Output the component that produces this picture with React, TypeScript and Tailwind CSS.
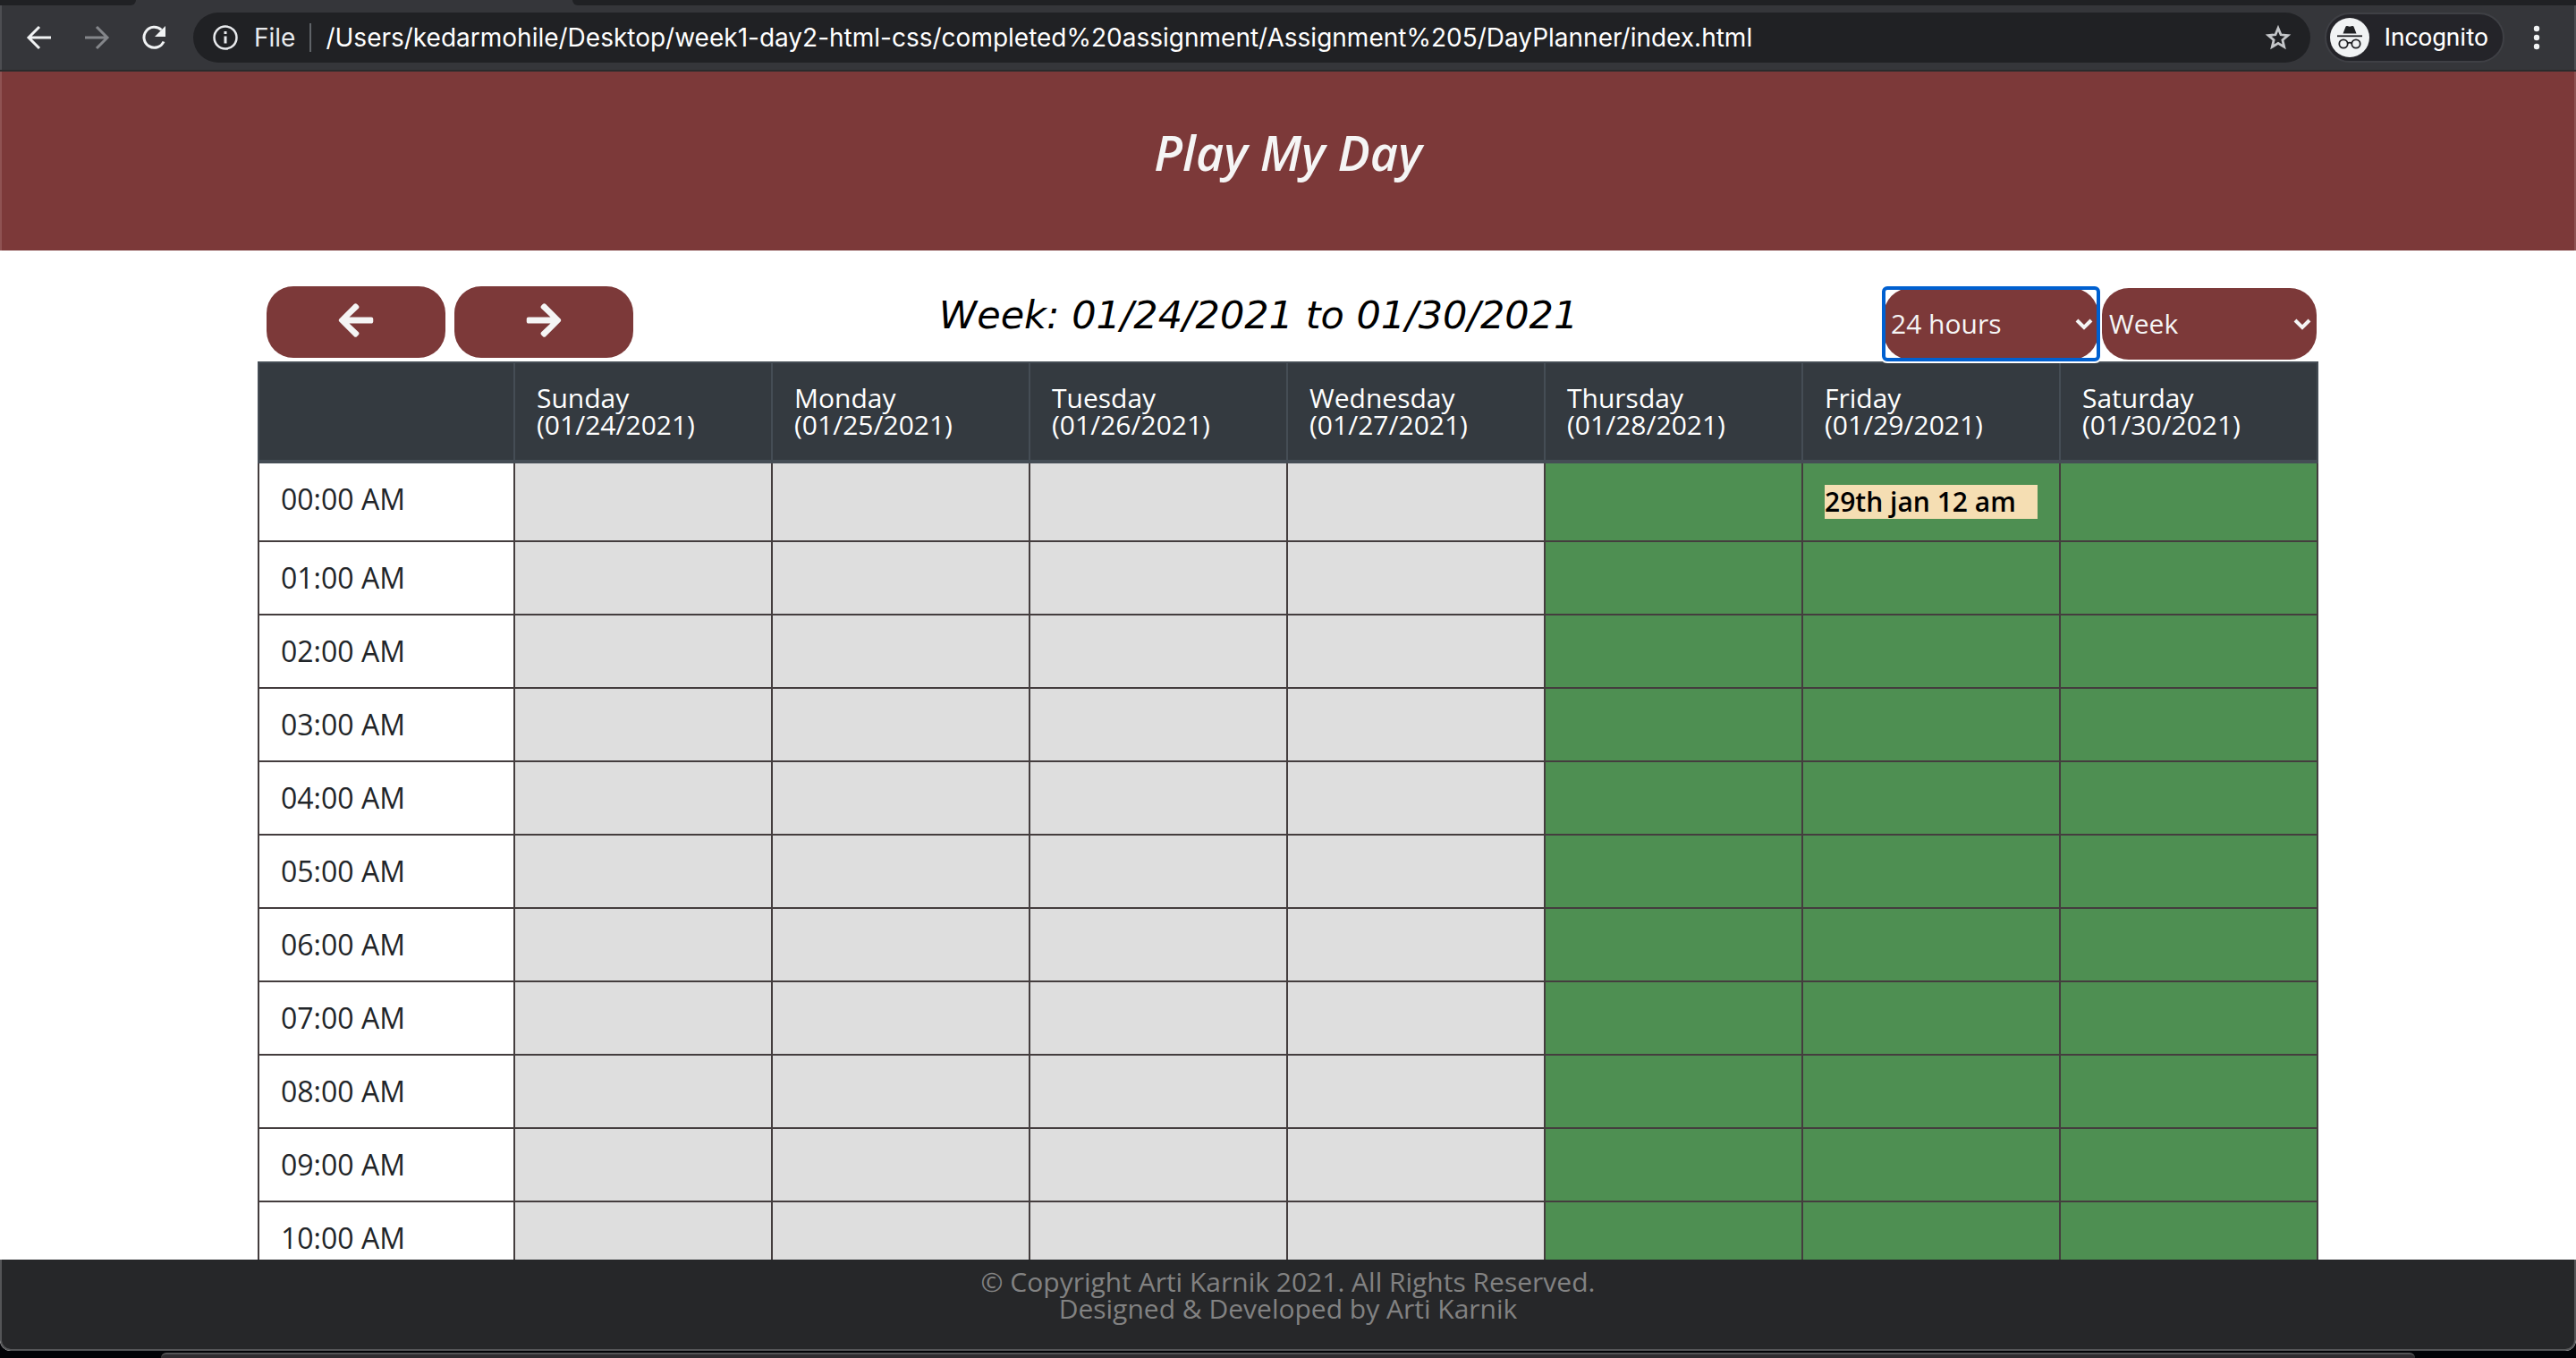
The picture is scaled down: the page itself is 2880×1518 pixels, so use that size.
import React from "react";
import { FaArrowLeft, FaArrowRight } from "react-icons/fa";

const days = [
  { name: "Sunday", date: "01/24/2021", past: true },
  { name: "Monday", date: "01/25/2021", past: true },
  { name: "Tuesday", date: "01/26/2021", past: true },
  { name: "Wednesday", date: "01/27/2021", past: true },
  { name: "Thursday", date: "01/28/2021", past: false },
  { name: "Friday", date: "01/29/2021", past: false },
  { name: "Saturday", date: "01/30/2021", past: false },
];

const hours = Array.from({ length: 11 }, (_, i) => `${String(i).padStart(2, "0")}:00 AM`);

const events: Record<string, string> = { "00:00 AM|01/29/2021": "29th jan 12 am" };

function BrowserBar() {
  return (
    <div className="shrink-0 border-b-2 border-[#2a2b2c] bg-[#35363a] font-['Inter',sans-serif] text-[28px] leading-8 text-white">
      <div className="flex h-[6px] justify-between">
        <div className="w-[152px] rounded-br-lg bg-[#202124]" />
        <div className="ml-[488px] grow rounded-bl-lg bg-[#202124]" />
      </div>
      <div className="flex h-[72px] items-center border-x-2 border-[#4d4e52] pr-[26px] pl-[22px]">
        <button aria-label="Back" className="mr-6">
          <svg className="size-10" viewBox="0 0 40 40" fill="none" stroke="#f1f3f4" strokeWidth="3">
            <path d="M33 20H9M20 8L8 20l12 12" />
          </svg>
        </button>
        <button aria-label="Forward" className="mr-6">
          <svg className="size-10" viewBox="0 0 40 40" fill="none" stroke="#84868a" strokeWidth="3">
            <path d="M7 20h24M20 8l12 12-12 12" />
          </svg>
        </button>
        <button aria-label="Reload" className="mr-6">
          <svg className="size-10" viewBox="0 0 40 40">
            <path d="M31 24.500A11.500 11.500 0 1 1 28.500 11.500" fill="none" stroke="#f1f3f4" strokeWidth="3" />
            <path d="M33 7v12H21z" fill="#f1f3f4" />
          </svg>
        </button>
        <div className="flex h-14 grow items-center rounded-full bg-[#202124] pl-5 pr-5">
          <svg className="size-8" viewBox="0 0 32 32" fill="none" stroke="#e8eaed" strokeWidth="2.500">
            <circle cx="16" cy="16" r="12.500" />
            <path d="M16 14.500v8M16 9v3" strokeWidth="3" />
          </svg>
          <span className="ml-4 text-[#e8eaed]">File</span>
          <span className="mx-4 h-8 w-[2px] bg-[#5f6368]" />
          <span className="grow">
            /Users/kedarmohile/Desktop/week1-day2-html-css/completed%20assignment/Assignment%205/DayPlanner/index.html
          </span>
          <button aria-label="Bookmark this page">
            <svg className="size-8" viewBox="0 0 32 32" fill="none" stroke="#c4c6c9" strokeWidth="2.800">
              <path d="M16 5.500l3 7.300 7.900.700-6 5.200 1.800 7.700-6.700-4.100-6.700 4.100 1.800-7.700-6-5.200 7.900-.700z" />
            </svg>
          </button>
        </div>
        <button className="ml-4 flex h-14 items-center gap-4 rounded-full border-2 border-[#3f4045] bg-[#242429] pl-1 pr-4 font-['Roboto',sans-serif]">
          <svg className="size-11" viewBox="0 0 44 44">
            <circle cx="22" cy="22" r="22" fill="#f1f3f4" />
            <path d="M14.500 17.500l3-7.800c.3-.7 1-.9 1.700-.7l2.800.8 2.800-.8c.7-.2 1.400 0 1.700.7l3 7.800z" fill="#202124" />
            <path d="M8 20.300h28" stroke="#202124" strokeWidth="1.800" />
            <g fill="none" stroke="#202124" strokeWidth="1.800">
              <circle cx="15" cy="29" r="4.700" />
              <circle cx="29" cy="29" r="4.700" />
              <path d="M19.500 28.500c1.500-1 3.500-1 5 0" />
            </g>
          </svg>
          <span>Incognito</span>
        </button>
        <button aria-label="Menu" className="ml-5">
          <svg className="h-8 w-8" viewBox="0 0 32 32" fill="#f1f3f4">
            <circle cx="16" cy="6" r="3.200" />
            <circle cx="16" cy="16" r="3.200" />
            <circle cx="16" cy="26" r="3.200" />
          </svg>
        </button>
      </div>
    </div>
  );
}

function Picker({ label, options, focused }: { label: string; options: string[]; focused?: boolean }) {
  return (
    <div
      className={
        focused
          ? "relative after:pointer-events-none after:absolute after:-inset-[2px] after:rounded-md after:border-4 after:border-[#0060d0] after:shadow-[0_0_0_2px_#fff]"
          : "relative"
      }
    >
      <select
        aria-label={label}
        className="block h-20 w-60 appearance-none rounded-[30px] bg-[#7c3939] pl-2 font-['Open_Sans',sans-serif] text-[30px] leading-10 font-medium text-[#f5f5f5]"
      >
        {options.map((o) => (
          <option key={o}>{o}</option>
        ))}
      </select>
      <svg
        className="pointer-events-none absolute top-8 right-[6px] h-4 w-5"
        viewBox="0 0 20 16"
        fill="none"
        stroke="#f5f5f5"
        strokeWidth="4"
      >
        <path d="M2 4l8 8 8-8" />
      </svg>
    </div>
  );
}

function Planner() {
  return (
    <main className="mx-auto min-h-0 w-4/5 flex-1 overflow-hidden">
      <div className="flex h-[124px] items-end justify-between pr-[2px] pb-[2px] pl-[10px]">
        <div className="mb-[2px] flex gap-[10px]">
          <button
            aria-label="Previous week"
            className="flex h-20 w-[200px] items-center justify-center rounded-[30px] bg-[#7c3939] text-[#f5f5f5]"
          >
            <FaArrowLeft className="-mt-1 size-11" />
          </button>
          <button
            aria-label="Next week"
            className="flex h-20 w-[200px] items-center justify-center rounded-[30px] bg-[#7c3939] text-[#f5f5f5]"
          >
            <FaArrowRight className="-mt-1 size-11" />
          </button>
        </div>
        <h2 className="mb-[22px] font-['DejaVu_Sans',sans-serif] text-[43px] leading-[56px] text-black italic">
          Week: 01/24/2021 to 01/30/2021
        </h2>
        <div className="flex gap-1">
          <Picker label="Hours shown" options={["24 hours", "12 hours"]} focused />
          <Picker label="View" options={["Week", "Day"]} />
        </div>
      </div>
      <table className="w-full table-fixed border-separate border-spacing-0 text-left">
        <thead>
          <tr className="h-[114px] bg-[#343a40] align-top text-[30px] leading-[30px] text-white">
            <th className="border-2 border-b-4 border-[#454d55]" />
            {days.map((d) => (
              <th key={d.date} className="border-t-2 border-r-2 border-b-4 border-[#454d55] px-6 pt-6 font-medium">
                {d.name}
                <br />({d.date})
              </th>
            ))}
          </tr>
        </thead>
        <tbody>
          {hours.map((h, i) => (
            <tr key={h} className={i === 0 ? "h-[88px] align-top" : "h-[82px] align-top"}>
              <th
                scope="row"
                className="border-x-2 border-b-2 border-[#443d3e] px-6 pt-[22px] text-[32px] leading-[36px] font-normal text-[#212529]"
              >
                {h}
              </th>
              {days.map((d) => {
                const event = events[`${h}|${d.date}`];
                return (
                  <td
                    key={d.date}
                    className={
                      d.past
                        ? "border-r-2 border-b-2 border-[#443d3e] bg-[#dedede] px-6 pt-6"
                        : "border-r-2 border-b-2 border-[#443d3e] bg-[#4e8f52] px-6 pt-6"
                    }
                  >
                    {event && (
                      <div className="bg-[#f5deb3] text-[30px] leading-[38px] font-semibold whitespace-nowrap text-black">
                        {event}
                      </div>
                    )}
                  </td>
                );
              })}
            </tr>
          ))}
        </tbody>
      </table>
    </main>
  );
}

export default function App() {
  return (
    <div className="flex h-screen flex-col overflow-hidden bg-[#020307] font-['Open_Sans',sans-serif]">
      <div className="relative flex min-h-0 flex-1 flex-col overflow-hidden rounded-b-xl bg-white">
        <BrowserBar />
        <header className="flex h-[200px] shrink-0 justify-center border-x-2 border-[#8f5252] bg-[#7c3939] pt-[54px]">
          <h1 className="text-[54px] leading-[72px] font-semibold text-[#f5f5f5] italic">Play My Day</h1>
        </header>
        <Planner />
        <footer className="h-[102px] shrink-0 rounded-b-xl border-x-2 border-b-2 border-[#545557] bg-[#262729] pt-[10px] text-center text-[30px] leading-[30px] text-[#828282]">
          <p>© Copyright Arti Karnik 2021. All Rights Reserved.</p>
          <p>Designed &amp; Developed by Arti Karnik</p>
        </footer>
      </div>
      <div className="mx-[180px] mt-[2px] h-[6px] shrink-0 rounded-t-md border-t-2 border-[#545456] bg-[#2f2c30]" />
    </div>
  );
}
